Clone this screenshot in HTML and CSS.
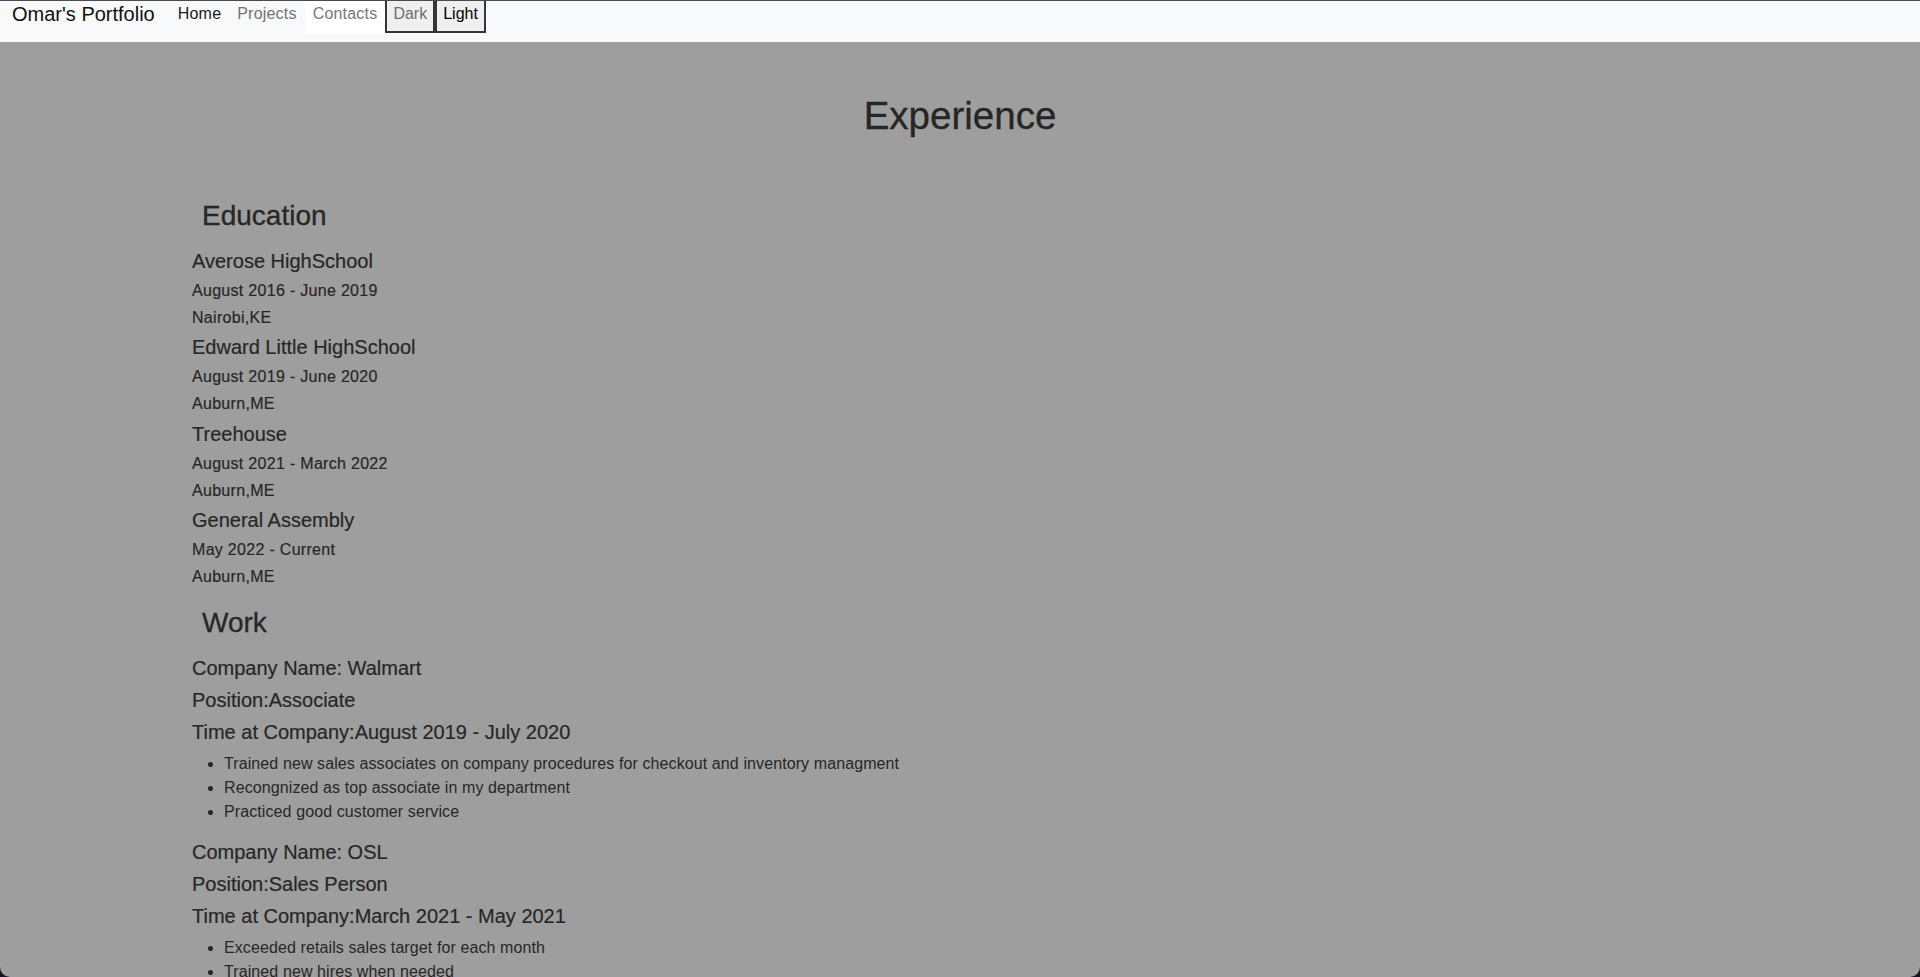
FILE: index.html
```html
<!DOCTYPE html>
<html lang="en">
<head>
<meta charset="utf-8">
<title>Omar's Portfolio - Experience</title>
<link rel="stylesheet" href="styles.css">
</head>
<body>
<div class="window">
  <nav class="navbar">
    <a class="brand" href="#">Omar's Portfolio</a>
    <ul class="nav">
      <li><a class="nav-link current" href="#">Home</a></li>
      <li><a class="nav-link" href="#">Projects</a></li>
      <li><a class="nav-link hovered" href="#">Contacts</a></li>
    </ul>
    <div class="theme">
      <button class="theme-btn muted" type="button">Dark</button>
      <button class="theme-btn" type="button">Light</button>
    </div>
  </nav>
  <main class="page">
    <h1 class="title">Experience</h1>
    <section class="section">
      <h3 class="section-title">Education</h3>
      <div class="entry">
        <h5 class="item-title">Averose HighSchool</h5>
        <h6 class="item-meta">August 2016 - June 2019</h6>
        <h6 class="item-meta">Nairobi,KE</h6>
      </div>
      <div class="entry">
        <h5 class="item-title">Edward Little HighSchool</h5>
        <h6 class="item-meta">August 2019 - June 2020</h6>
        <h6 class="item-meta">Auburn,ME</h6>
      </div>
      <div class="entry">
        <h5 class="item-title">Treehouse</h5>
        <h6 class="item-meta">August 2021 - March 2022</h6>
        <h6 class="item-meta">Auburn,ME</h6>
      </div>
      <div class="entry">
        <h5 class="item-title">General Assembly</h5>
        <h6 class="item-meta">May 2022 - Current</h6>
        <h6 class="item-meta">Auburn,ME</h6>
      </div>
    </section>
    <section class="section">
      <h3 class="section-title">Work</h3>
      <div class="entry">
        <h5 class="item-title">Company Name: Walmart</h5>
        <h5 class="item-title">Position:Associate</h5>
        <h5 class="item-title">Time at Company:August 2019 - July 2020</h5>
        <ul class="duties">
          <li>Trained new sales associates on company procedures for checkout and inventory managment</li>
          <li>Recongnized as top associate in my department</li>
          <li>Practiced good customer service</li>
        </ul>
      </div>
      <div class="entry">
        <h5 class="item-title">Company Name: OSL</h5>
        <h5 class="item-title">Position:Sales Person</h5>
        <h5 class="item-title">Time at Company:March 2021 - May 2021</h5>
        <ul class="duties">
          <li>Exceeded retails sales target for each month</li>
          <li>Trained new hires when needed</li>
          <li>Practiced good customer service</li>
        </ul>
      </div>
    </section>
  </main>
</div>
</body>
</html>
```

FILE: styles.css
```css
html {
  background: #17142b;
}

body {
  margin: 0;
  font-family: "Liberation Sans", Arial, sans-serif;
  color: #272727;
}

.window {
  height: 100vh;
  box-sizing: border-box;
  overflow: hidden;
  border-top: 1px solid #4a4a4a;
  border-radius: 0 0 10px 10px;
  background: #9e9e9e;
  display: flex;
  flex-direction: column;
}

/* ---------- navbar ---------- */
.navbar {
  flex: 0 0 41px;
  display: flex;
  align-items: flex-start;
  padding: 0 12px;
  background: #f8f9fa;
}

.brand {
  font-size: 20px;
  line-height: 26px;
  color: #111;
  text-decoration: none;
  margin-right: 15px;
}

.nav {
  display: flex;
  list-style: none;
  margin: 0;
  padding: 0;
}

.nav-link {
  display: block;
  padding: 0.5px 8px 7.5px;
  font-size: 16px;
  line-height: 24px;
  letter-spacing: 0.2px;
  color: #737474;
  text-decoration: none;
}

.nav-link.current {
  color: #1a1a1a;
}

.nav-link.hovered {
  background: #ffffff;
  color: #777777;
}

.theme {
  display: flex;
}

.theme-btn {
  margin: 0;
  font-family: "Liberation Sans", Arial, sans-serif;
  font-size: 16px;
  line-height: 24px;
  padding: 0.5px 6px 5.5px;
  border: 2px solid #353535;
  border-top: 0;
  background: #efefef;
  color: #000;
}

.theme-btn.muted {
  color: #6e6e6e;
}

/* ---------- page ---------- */
.page {
  flex: 1;
  padding: 51px 10% 0;
}

.title {
  margin: 0 0 59.5px;
  text-align: center;
  font-size: 38.5px;
  line-height: 1.2;
  font-weight: 500;
  color: #262626;
  -webkit-text-stroke: 0.35px #262626;
}

.section-title {
  margin: 20px 0 16.5px;
  padding-left: 10px;
  font-size: 28px;
  line-height: 1.2;
  font-weight: 500;
  -webkit-text-stroke: 0.3px #272727;
}

.item-title {
  margin: 0 0 8px;
  font-size: 20px;
  line-height: 24px;
  font-weight: 500;
  -webkit-text-stroke: 0.2px #272727;
}

.item-meta {
  margin: 0 0 8px;
  font-size: 16px;
  line-height: 1.2;
  font-weight: 500;
  letter-spacing: 0.3px;
  -webkit-text-stroke: 0.2px #272727;
}

.duties {
  margin: 0 0 16px;
  padding-left: 32px;
  font-size: 16px;
  line-height: 24px;
  letter-spacing: 0.1px;
}
```
